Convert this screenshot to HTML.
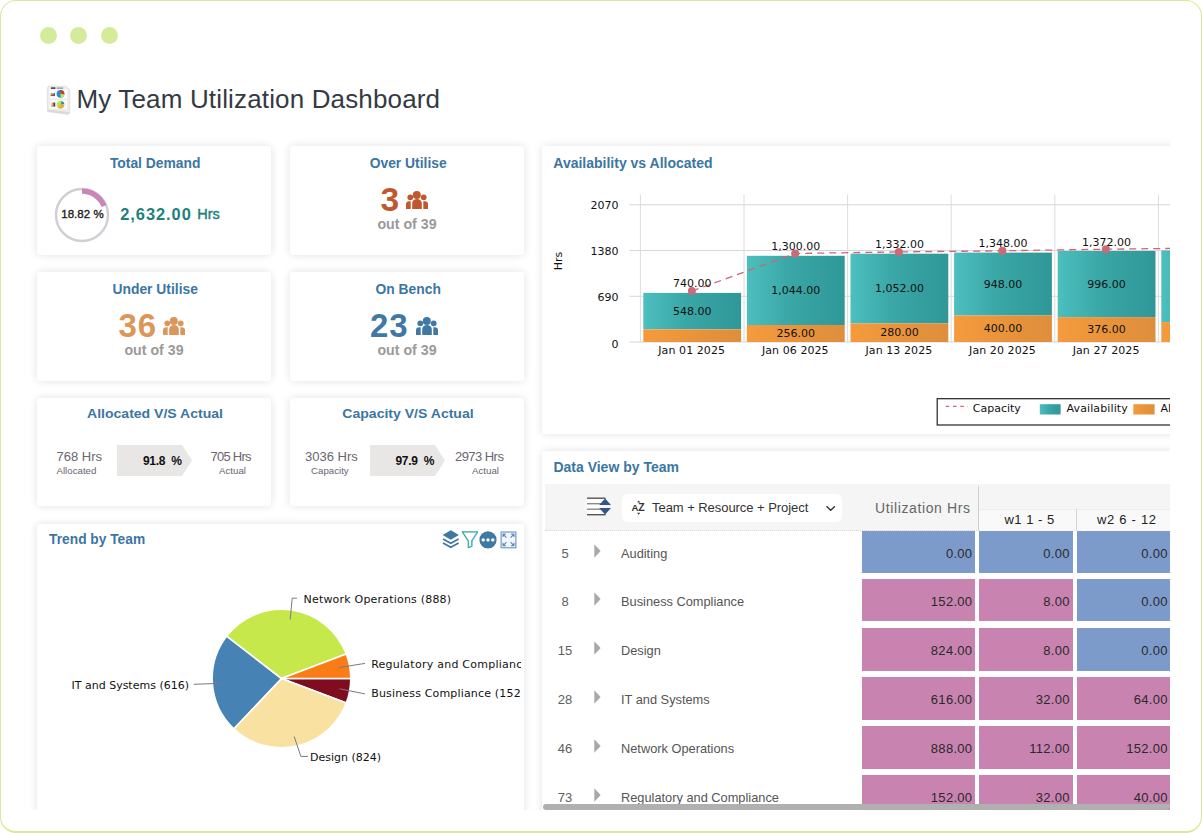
<!DOCTYPE html>
<html lang="en">
<head>
<meta charset="utf-8">
<title>My Team Utilization Dashboard</title>
<style>
*{box-sizing:border-box;margin:0;padding:0}
html,body{width:1202px;height:833px;overflow:hidden;background:#fff;font-family:"Liberation Sans",sans-serif;color:#333}
.abs{position:absolute}
#frame{position:absolute;left:0;top:0;width:1202px;height:833px;border:1.5px solid #d6ea9b;border-width:1.5px 1.8px 2px 1.5px;border-radius:16px;background:transparent;pointer-events:none;z-index:50}
#clip{position:absolute;left:0;top:0;width:1170px;height:809.5px;overflow:hidden}
.dot{position:absolute;top:27.2px;width:17px;height:17px;border-radius:50%;background:#d5eb9c}
.card{position:absolute;background:#fff;border-radius:3px;box-shadow:0 0 8px rgba(0,0,0,.10),0 0 13px rgba(0,0,0,.025)}
.ct{position:absolute;left:1.2px;width:100%;text-align:center;font-weight:bold;font-size:13.85px;color:#3b76a3;white-space:nowrap}
.pt{position:absolute;font-weight:bold;font-size:14px;color:#3b76a3;white-space:nowrap}
.big{position:absolute;font-weight:bold;white-space:nowrap;line-height:1}
.oo{position:absolute;left:0;width:100%;text-align:center;font-size:14.2px;color:#9a9a9a;font-weight:bold;white-space:nowrap;line-height:1}
.ct2{position:absolute;left:0;width:100%;text-align:center;font-weight:bold;font-size:12px;color:#3b76a3;white-space:nowrap;transform:scaleX(1.17);line-height:15px}
.lt{color:#6b6570}
.cell{position:absolute;height:42.7px;line-height:45.4px;text-align:right;padding-right:3.2px;font-size:13px;color:#2a2a2a;white-space:nowrap;letter-spacing:0.3px}
.rn{font-size:13px;color:#5e5e5e}
.rt{font-size:12.8px;color:#555;letter-spacing:0px}
.t{position:absolute;white-space:nowrap;line-height:1}
#title{position:absolute;left:76.5px;top:84px;font-size:26px;line-height:30px;color:#343a45;white-space:nowrap;letter-spacing:0.15px}
</style>
</head>
<body>
<div id="frame"></div>
<div id="clip">
  <div class="dot" style="left:40.2px"></div>
  <div class="dot" style="left:70px"></div>
  <div class="dot" style="left:100.5px"></div>

  <!--TICON-->
<svg class="abs" style="left:46px;top:85px" width="26" height="31" viewBox="0 0 26 31">
<path d="M2.6 1.2 H19.8 L23.8 5 V27.2 L22.6 29.4 L1.4 26.6 V3 Z" fill="#ececec" stroke="#dcdcdc" stroke-width="0.8"/>
<path d="M1.4 26.6 L22.6 29.4 L23.8 27.2 L2.2 24.6 Z" fill="#d9d9dd"/>
<rect x="3.6" y="4.6" width="17.4" height="8.8" fill="#fff"/>
<rect x="3.6" y="15" width="17.4" height="8.8" fill="#fbfbfb"/>
<rect x="5" y="2.4" width="4.4" height="1.4" fill="#2b2b33"/><rect x="10.8" y="2.6" width="6.4" height="1" fill="#7a7a86"/>
<circle cx="14.5" cy="8.8" r="3.9" fill="#2f88d8"/>
<path d="M14.5 8.8 L14.5 4.9 A3.9 3.9 0 0 1 18.3 9.6 Z" fill="#c8402a"/>
<path d="M14.5 8.8 L18.3 9.6 A3.9 3.9 0 0 1 14.8 12.7 Z" fill="#c9ee3a"/>
<rect x="4.6" y="8.4" width="4.4" height="1.2" fill="#4a6fb0"/><rect x="4.6" y="9.8" width="4.4" height="1.3" fill="#c44a1e"/><rect x="7.6" y="8.6" width="1.4" height="2.4" fill="#555"/>
<circle cx="14.5" cy="19.6" r="3.9" fill="#b7ee45"/>
<path d="M14.5 19.6 L15.8 15.9 A3.9 3.9 0 0 1 18.4 19 Z" fill="#2f88d8"/>
<path d="M14.5 19.6 L18.4 19.9 A3.9 3.9 0 0 1 11.8 22.4 Z" fill="#f5a348"/>
<rect x="5.4" y="17.8" width="1.2" height="3.8" fill="#f0c13a"/><rect x="6.6" y="17.4" width="1.2" height="4.2" fill="#d94b4b"/><rect x="7.8" y="17.6" width="1.4" height="4" fill="#3a3a44"/><rect x="5.4" y="20.6" width="1.2" height="1.2" fill="#38b6e8"/>
</svg>
<!--/TICON-->
  <div id="title">My Team Utilization Dashboard</div>

  <!-- KPI cards -->
  <div class="card" id="c1" style="left:37px;top:146px;width:234px;height:109px">
    <div class="ct" style="top:9px">Total Demand</div>
    <svg class="abs" style="left:16.2px;top:40.2px" width="58" height="58" viewBox="0 0 58 58">
      <circle cx="29" cy="29" r="26" fill="none" stroke="#d3ccd5" stroke-width="2.4"/>
      <path d="M29 5.2 A23.8 23.8 0 0 1 51 19.97" fill="none" stroke="#c985b7" stroke-width="5.2"/>
    </svg>
    <div class="t" style="left:24.2px;top:62.8px;font-size:11.5px;color:#1d1d1d;letter-spacing:0.05px;-webkit-text-stroke:0.35px #1d1d1d">18.82 %</div>
    <div class="t" style="left:83.3px;top:60.2px;font-size:16.4px;font-weight:bold;color:#1e7f7b;letter-spacing:0.95px">2,632.00</div>
    <div class="t" style="left:160.2px;top:60.7px;font-size:14.5px;color:#1e7f7b;-webkit-text-stroke:0.45px #1e7f7b">Hrs</div>
  </div>
  <div class="card" id="c2" style="left:290px;top:146px;width:234px;height:109px">
    <div class="ct" style="top:9px">Over Utilise</div>
    <div class="big" style="left:90.6px;top:36.6px;font-size:33.5px;color:#c0572f;letter-spacing:0px">3</div>
    <svg class="abs" style="left:116px;top:45px" width="22" height="18" viewBox="0 0 22 18" fill="#c0572f"><circle cx="10.8" cy="4" r="4"/>
<circle cx="4.3" cy="6.3" r="2.9"/>
<circle cx="17.7" cy="6.3" r="2.9"/>
<path d="M6.2 18 V12.2 a4.8 4.2 0 0 1 9.6 0 V18 Z"/>
<path d="M0 18 V13.6 a3.3 3.3 0 0 1 3.3 -3.3 h1.4 V18 Z"/>
<path d="M22 18 V13.6 a3.3 3.3 0 0 0 -3.3 -3.3 h-1.4 V18 Z"/></svg>
    <div class="oo" style="top:70.5px">out of 39</div>
  </div>
  <div class="card" id="c3" style="left:37px;top:272px;width:234px;height:109px">
    <div class="ct" style="top:9px">Under Utilise</div>
    <div class="big" style="left:81.5px;top:37px;font-size:33px;color:#db9659;letter-spacing:1px">36</div>
    <svg class="abs" style="left:126px;top:45px" width="22" height="18" viewBox="0 0 22 18" fill="#db9659"><circle cx="10.8" cy="4" r="4"/>
<circle cx="4.3" cy="6.3" r="2.9"/>
<circle cx="17.7" cy="6.3" r="2.9"/>
<path d="M6.2 18 V12.2 a4.8 4.2 0 0 1 9.6 0 V18 Z"/>
<path d="M0 18 V13.6 a3.3 3.3 0 0 1 3.3 -3.3 h1.4 V18 Z"/>
<path d="M22 18 V13.6 a3.3 3.3 0 0 0 -3.3 -3.3 h-1.4 V18 Z"/></svg>
    <div class="oo" style="top:70.5px">out of 39</div>
  </div>
  <div class="card" id="c4" style="left:290px;top:272px;width:234px;height:109px">
    <div class="ct" style="top:9px">On Bench</div>
    <div class="big" style="left:80px;top:37px;font-size:33px;color:#3f78a4;letter-spacing:1px">23</div>
    <svg class="abs" style="left:126px;top:45px" width="22" height="18" viewBox="0 0 22 18" fill="#3f78a4"><circle cx="10.8" cy="4" r="4"/>
<circle cx="4.3" cy="6.3" r="2.9"/>
<circle cx="17.7" cy="6.3" r="2.9"/>
<path d="M6.2 18 V12.2 a4.8 4.2 0 0 1 9.6 0 V18 Z"/>
<path d="M0 18 V13.6 a3.3 3.3 0 0 1 3.3 -3.3 h1.4 V18 Z"/>
<path d="M22 18 V13.6 a3.3 3.3 0 0 0 -3.3 -3.3 h-1.4 V18 Z"/></svg>
    <div class="oo" style="top:70.5px">out of 39</div>
  </div>
  <div class="card" id="c5" style="left:37px;top:398px;width:234px;height:108px">
    <div class="ct2" style="top:9.2px;left:1px">Allocated V/S Actual</div>
    <svg class="abs" style="left:80px;top:47px" width="76" height="31"><path d="M0 0 H65 L75 15.5 L65 31 H0 Z" fill="#e9e6e6"/></svg>
    <div class="t" style="left:106px;top:57px;font-size:12px;font-weight:bold;color:#111;letter-spacing:-0.3px;word-spacing:3px">91.8 %</div>
    <div class="t lt" style="left:19.5px;top:51.5px;font-size:13px">768 Hrs</div>
    <div class="t lt" style="left:19.5px;top:67.5px;font-size:9.7px">Allocated</div>
    <div class="t lt" style="left:173.5px;top:51.5px;font-size:13px;letter-spacing:-0.75px">705 Hrs</div>
    <div class="t lt" style="left:182px;top:67.5px;font-size:9.7px">Actual</div>
  </div>
  <div class="card" id="c6" style="left:290px;top:398px;width:234px;height:108px">
    <div class="ct2" style="top:9.2px;left:1px">Capacity V/S Actual</div>
    <svg class="abs" style="left:80px;top:47px" width="76" height="31"><path d="M0 0 H65 L75 15.5 L65 31 H0 Z" fill="#e9e6e6"/></svg>
    <div class="t" style="left:105.5px;top:57px;font-size:12px;font-weight:bold;color:#111;letter-spacing:-0.3px;word-spacing:3px">97.9 %</div>
    <div class="t lt" style="left:15px;top:51.5px;font-size:13px">3036 Hrs</div>
    <div class="t lt" style="left:21px;top:67.5px;font-size:9.7px">Capacity</div>
    <div class="t lt" style="left:165px;top:51.5px;font-size:13px;letter-spacing:-0.55px">2973 Hrs</div>
    <div class="t lt" style="left:182px;top:67.5px;font-size:9.7px">Actual</div>
  </div>

  <!-- Trend by team -->
  <div class="card" id="trend" style="left:37px;top:524px;width:487px;height:300px">
    <div class="pt" style="left:12.1px;top:8.3px;font-size:13.75px">Trend by Team</div>
<!--TOOLS-->
<svg class="abs" style="left:405px;top:5.5px" width="18" height="19" viewBox="0 0 18 19">
<path d="M8.8 0.3 L16.9 5 L8.8 9.7 L0.7 5 Z" fill="#3f78a3"/>
<path d="M1 8.9 L8.8 13.2 L16.6 8.9" fill="none" stroke="#3f78a3" stroke-width="1.7"/>
<path d="M1 12.9 L8.8 17.2 L16.6 12.9" fill="none" stroke="#3f78a3" stroke-width="1.7"/>
</svg>
<svg class="abs" style="left:424px;top:6px" width="18" height="19" viewBox="0 0 18 19">
<path d="M1.3 1.8 H16.7 L10.8 10.8 V16.2 L7.3 17.6 V10.8 Z" fill="#fff" stroke="#2aa9a0" stroke-width="1.2" stroke-linejoin="round"/>
<path d="M16.7 1.8 L10.8 10.8 V16.2" fill="none" stroke="#5bb4e8" stroke-width="1.2"/>
</svg>
<svg class="abs" style="left:442px;top:7px" width="18" height="18" viewBox="0 0 18 18">
<circle cx="9" cy="8.9" r="8.6" fill="#3f78a3"/><circle cx="4.2" cy="8.9" r="1.7" fill="#fff"/><circle cx="9" cy="8.9" r="1.7" fill="#fff"/><circle cx="13.8" cy="8.9" r="1.7" fill="#fff"/>
</svg>
<svg class="abs" style="left:463.1px;top:6.5px" width="17" height="18" viewBox="0 0 17 18">
<rect x="1.1" y="1" width="14.8" height="15.8" fill="#f2f6fc" stroke="#5a86bd" stroke-width="1"/>
<g stroke="#5a86bd" stroke-width="1.1" fill="none">
<path d="M3 3 L6.4 6.6 M3 3 h3 M3 3 v3" fill="none"/>
<path d="M14 3 L10.6 6.6 M14 3 h-3 M14 3 v3" fill="none"/>
<path d="M3 14.8 L6.4 11.2 M3 14.8 h3 M3 14.8 v-3" fill="none"/>
<path d="M14 14.8 L10.6 11.2 M14 14.8 h-3 M14 14.8 v-3" fill="none"/>
</g></svg>
<!--/TOOLS-->
<!--PIE-->
<svg class="abs" style="left:0;top:0" width="484" height="300" viewBox="37 524 484 300" font-family="'DejaVu Sans',sans-serif" font-size="11px">
<path d="M281.5 678.5 L350.80 678.50 A69.3 69.3 0 0 1 346.29 703.10 Z" fill="#800d1f" stroke="#fff" stroke-width="1.6" stroke-linejoin="round"/>
<path d="M281.5 678.5 L346.29 703.10 A69.3 69.3 0 0 1 233.80 728.77 Z" fill="#f9e2a1" stroke="#fff" stroke-width="1.6" stroke-linejoin="round"/>
<path d="M281.5 678.5 L233.80 728.77 A69.3 69.3 0 0 1 226.71 636.07 Z" fill="#4682b4" stroke="#fff" stroke-width="1.6" stroke-linejoin="round"/>
<path d="M281.5 678.5 L226.71 636.07 A69.3 69.3 0 0 1 346.29 653.90 Z" fill="#c6e84a" stroke="#fff" stroke-width="1.6" stroke-linejoin="round"/>
<path d="M281.5 678.5 L346.29 653.90 A69.3 69.3 0 0 1 350.80 678.50 Z" fill="#f97c16" stroke="#fff" stroke-width="1.6" stroke-linejoin="round"/>
<polyline points="297,598.2 292.2,598.2 290.2,619.5" fill="none" stroke="#7a7a86" stroke-width="1"/>
<polyline points="365,663.4 338.7,667.6" fill="none" stroke="#7a7a86" stroke-width="1"/>
<polyline points="365,693.9 339.6,688.8" fill="none" stroke="#7a7a86" stroke-width="1"/>
<polyline points="308,756.4 300.9,756.4 294.2,736.6" fill="none" stroke="#7a7a86" stroke-width="1"/>
<polyline points="193.7,684.3 221.6,683.3" fill="none" stroke="#7a7a86" stroke-width="1"/>
<text x="303.5" y="602.6" fill="#111" letter-spacing="0.2">Network Operations (888)</text>
<text x="371.2" y="667.5" fill="#111" letter-spacing="0.25">Regulatory and Compliance (152)</text>
<text x="371.2" y="697.2" fill="#111" letter-spacing="0.17">Business Compliance (152)</text>
<text x="310" y="760.8" fill="#111">Design (824)</text>
<text x="71.5" y="688.7" fill="#111">IT and Systems (616)</text>
</svg>
<!--/PIE-->
  </div>

  <!-- Availability vs Allocated -->
  <div class="card" id="avail" style="left:542px;top:146px;width:660px;height:288px">
    <div class="pt" style="left:11.3px;top:9.3px">Availability vs Allocated</div>
<!--CHART-->
<svg class="abs" style="left:0;top:0" width="660" height="288" viewBox="542 146 660 288" font-family="'DejaVu Sans',sans-serif" font-size="11px">
<defs><linearGradient id="gt" x1="0" x2="1" y1="0" y2="0"><stop offset="0" stop-color="#4cbfbe"/><stop offset="0.45" stop-color="#3aa6a6"/><stop offset="1" stop-color="#2f9797"/></linearGradient>
<linearGradient id="go" x1="0" x2="1" y1="0" y2="0"><stop offset="0" stop-color="#f59b3d"/><stop offset="0.5" stop-color="#e9933b"/><stop offset="1" stop-color="#de8e3c"/></linearGradient></defs>
<line x1="629.5" x2="1202" y1="342.0" y2="342.0" stroke="#d6d6da" stroke-width="1"/>
<line x1="629.5" x2="1202" y1="296.3" y2="296.3" stroke="#d6d6da" stroke-width="1"/>
<line x1="629.5" x2="1202" y1="250.5" y2="250.5" stroke="#d6d6da" stroke-width="1"/>
<line x1="629.5" x2="1202" y1="204.8" y2="204.8" stroke="#d6d6da" stroke-width="1"/>
<line x1="640.4" x2="640.4" y1="194.5" y2="342.3" stroke="#dcdcdf" stroke-width="1"/>
<line x1="744.0" x2="744.0" y1="194.5" y2="342.3" stroke="#dcdcdf" stroke-width="1"/>
<line x1="847.6" x2="847.6" y1="194.5" y2="342.3" stroke="#dcdcdf" stroke-width="1"/>
<line x1="951.2" x2="951.2" y1="194.5" y2="342.3" stroke="#dcdcdf" stroke-width="1"/>
<line x1="1054.8" x2="1054.8" y1="194.5" y2="342.3" stroke="#dcdcdf" stroke-width="1"/>
<line x1="1158.4" x2="1158.4" y1="194.5" y2="342.3" stroke="#dcdcdf" stroke-width="1"/>
<text x="618.5" y="347.6" text-anchor="end" fill="#111">0</text>
<text x="618.5" y="300.9" text-anchor="end" fill="#111">690</text>
<text x="618.5" y="255.1" text-anchor="end" fill="#111">1380</text>
<text x="618.5" y="209.4" text-anchor="end" fill="#111">2070</text>
<text transform="translate(562.4,261) rotate(-90)" text-anchor="middle" fill="#111">Hrs</text>
<rect x="643.3" y="292.9" width="97.8" height="36.3" fill="url(#gt)"/>
<rect x="643.3" y="329.3" width="97.8" height="12.7" fill="url(#go)"/>
<rect x="746.9" y="255.8" width="97.8" height="69.2" fill="url(#gt)"/>
<rect x="746.9" y="325.0" width="97.8" height="17.0" fill="url(#go)"/>
<rect x="850.5" y="253.7" width="97.8" height="69.7" fill="url(#gt)"/>
<rect x="850.5" y="323.4" width="97.8" height="18.6" fill="url(#go)"/>
<rect x="954.1" y="252.6" width="97.8" height="62.9" fill="url(#gt)"/>
<rect x="954.1" y="315.5" width="97.8" height="26.5" fill="url(#go)"/>
<rect x="1057.7" y="251.0" width="97.8" height="66.0" fill="url(#gt)"/>
<rect x="1057.7" y="317.1" width="97.8" height="24.9" fill="url(#go)"/>
<rect x="1161.3" y="250.5" width="97.8" height="71.6" fill="url(#gt)"/>
<rect x="1161.3" y="322.1" width="97.8" height="19.9" fill="url(#go)"/>
<polyline points="691.9,291.1 795.2,253.5 898.9,251.9 1002.4,250.8 1105.9,249.2 1209.5,248.0" fill="none" stroke="#cf6472" stroke-width="1.3" stroke-dasharray="7 5"/>
<circle cx="691.9" cy="291.1" r="4" fill="#cd6a77"/>
<circle cx="795.2" cy="253.5" r="4" fill="#cd6a77"/>
<circle cx="898.9" cy="251.9" r="4" fill="#cd6a77"/>
<circle cx="1002.4" cy="250.8" r="4" fill="#cd6a77"/>
<circle cx="1105.9" cy="249.2" r="4" fill="#cd6a77"/>
<text x="692.2" y="287.4" text-anchor="middle" fill="#111">740.00</text>
<text x="692.2" y="314.9" text-anchor="middle" fill="#111">548.00</text>
<text x="691.7" y="354.2" text-anchor="middle" fill="#111" letter-spacing="0.08">Jan 01 2025</text>
<text x="795.8" y="250.3" text-anchor="middle" fill="#111">1,300.00</text>
<text x="795.8" y="294.2" text-anchor="middle" fill="#111">1,044.00</text>
<text x="795.8" y="337.1" text-anchor="middle" fill="#111">256.00</text>
<text x="795.3" y="354.2" text-anchor="middle" fill="#111" letter-spacing="0.08">Jan 06 2025</text>
<text x="899.4" y="248.2" text-anchor="middle" fill="#111">1,332.00</text>
<text x="899.4" y="292.4" text-anchor="middle" fill="#111">1,052.00</text>
<text x="899.4" y="336.3" text-anchor="middle" fill="#111">280.00</text>
<text x="898.9" y="354.2" text-anchor="middle" fill="#111" letter-spacing="0.08">Jan 13 2025</text>
<text x="1003.0" y="247.1" text-anchor="middle" fill="#111">1,348.00</text>
<text x="1003.0" y="287.9" text-anchor="middle" fill="#111">948.00</text>
<text x="1003.0" y="332.3" text-anchor="middle" fill="#111">400.00</text>
<text x="1002.5" y="354.2" text-anchor="middle" fill="#111" letter-spacing="0.08">Jan 20 2025</text>
<text x="1106.6" y="245.5" text-anchor="middle" fill="#111">1,372.00</text>
<text x="1106.6" y="287.9" text-anchor="middle" fill="#111">996.00</text>
<text x="1106.6" y="333.1" text-anchor="middle" fill="#111">376.00</text>
<text x="1106.1" y="354.2" text-anchor="middle" fill="#111" letter-spacing="0.08">Jan 27 2025</text>
<rect x="937.2" y="398.7" width="300" height="26.3" fill="#fff" stroke="#222" stroke-width="1.2"/>
<line x1="945.7" x2="968" y1="406.3" y2="406.3" stroke="#cf6472" stroke-width="1.2" stroke-dasharray="3.5 3.8"/>
<text x="972.8" y="412.2" fill="#111">Capacity</text>
<rect x="1039.8" y="404.2" width="20.8" height="10.3" fill="url(#gt)"/>
<text x="1066.5" y="412.2" fill="#111" letter-spacing="0.12">Availability</text>
<rect x="1133.3" y="404.2" width="21.3" height="10.3" fill="url(#go)"/>
<text x="1160.6" y="412.2" fill="#111">Allocated</text>
</svg>
<!--/CHART-->
  </div>

  <!-- Data view -->
  <div class="card" id="dview" style="left:542px;top:451px;width:660px;height:371px">
    <div class="pt" style="left:11.4px;top:8.4px">Data View by Team</div>
<!--TABLE-->
<div class="abs" style="left:3px;top:33px;width:700px;height:46.5px;background:#f5f5f5;border-bottom:1px dotted #d9d9d9"></div>
<div class="abs" style="left:436.5px;top:57.60000000000002px;width:300px;height:22px;background:#f9f9f9;border-top:1px solid #ededed"></div>
<div class="abs" style="left:436px;top:35px;width:1px;height:44.5px;background:#cfcfcf"></div>
<div class="abs" style="left:533.5px;top:57.80000000000001px;width:1px;height:21.8px;background:#d4d4d4"></div>
<svg class="abs" style="left:44px;top:45px" width="27" height="21" viewBox="0 0 27 21">
<rect x="1" y="2" width="18.6" height="17" fill="#fdfdfd"/><g stroke-width="1.4"><line x1="1" x2="19.6" y1="2.2" y2="2.2" stroke="#555"/><line x1="1" x2="19" y1="7.7" y2="7.7" stroke="#8a8a8a"/><line x1="1" x2="19" y1="13.2" y2="13.2" stroke="#8a8a8a"/><line x1="1" x2="19.6" y1="18.7" y2="18.7" stroke="#555"/></g>
<path d="M13.2 9 L19.1 2.6 L25 9 Z" fill="#34548a"/><path d="M13.2 12 L19.1 18.4 L25 12 Z" fill="#34548a"/></svg>
<div class="abs" style="left:80px;top:43.30000000000001px;width:220.3px;height:27.5px;background:#fff;border-radius:6px"></div>
<div class="t" style="left:89.60000000000002px;top:50.30000000000001px;font-size:10.5px;line-height:12px;font-weight:bold;color:#333;letter-spacing:-0.3px"><span style="font-size:9.6px">A</span>Z</div>
<svg class="abs" style="left:95px;top:48px" width="8" height="18"><path d="M0.2 3.6 L1.7 1.6 L3.2 3.6 Z M0.2 13.7 L1.7 15.7 L3.2 13.7 Z" fill="#333"/></svg>
<div class="t" style="left:110px;top:50px;font-size:13px;color:#333;letter-spacing:-0.05px">Team + Resource + Project</div>
<svg class="abs" style="left:283px;top:52px" width="12" height="10"><path d="M1.5 3.2 L5.7 7.2 L9.9 3.2" fill="none" stroke="#333" stroke-width="1.4"/></svg>
<div class="t" style="left:333px;top:49.5px;font-size:14px;color:#666;letter-spacing:0.62px">Utilization Hrs</div>
<div class="t" style="left:462.5px;top:61.799999999999955px;font-size:13px;color:#222;letter-spacing:0.3px;word-spacing:0.5px">w1 1 - 5</div>
<div class="t" style="left:555px;top:61.799999999999955px;font-size:13px;color:#222;letter-spacing:0.5px;word-spacing:0.5px">w2 6 - 12</div>
<div class="t rn" style="left:8px;width:30px;text-align:center;top:95.79999999999995px">5</div>
<svg class="abs" style="left:52px;top:93.10000000000002px" width="8" height="14"><path d="M0.3 0.3 L6.6 7 L0.3 13.7 Z" fill="#a8a8a8"/></svg>
<div class="t rt" style="left:79px;top:96.89999999999998px">Auditing</div>
<div class="cell" style="left:320.4px;top:79.8px;width:112.5px;background:#7d9bca;padding-right:2.5px">0.00</div>
<div class="cell" style="left:437.0px;top:79.8px;width:94px;background:#7d9bca;padding-right:3.2px">0.00</div>
<div class="cell" style="left:535.0px;top:79.8px;width:93px;background:#7d9bca;padding-right:2.2px">0.00</div>
<div class="t rn" style="left:8px;width:30px;text-align:center;top:143.79999999999995px">8</div>
<svg class="abs" style="left:52px;top:141.10000000000002px" width="8" height="14"><path d="M0.3 0.3 L6.6 7 L0.3 13.7 Z" fill="#a8a8a8"/></svg>
<div class="t rt" style="left:79px;top:144.89999999999998px">Business Compliance</div>
<div class="cell" style="left:320.4px;top:127.8px;width:112.5px;background:#c983b1;padding-right:2.5px">152.00</div>
<div class="cell" style="left:437.0px;top:127.8px;width:94px;background:#c983b1;padding-right:3.2px">8.00</div>
<div class="cell" style="left:535.0px;top:127.8px;width:93px;background:#7d9bca;padding-right:2.2px">0.00</div>
<div class="t rn" style="left:8px;width:30px;text-align:center;top:193.0px">15</div>
<svg class="abs" style="left:52px;top:190.30000000000007px" width="8" height="14"><path d="M0.3 0.3 L6.6 7 L0.3 13.7 Z" fill="#a8a8a8"/></svg>
<div class="t rt" style="left:79px;top:194.10000000000002px">Design</div>
<div class="cell" style="left:320.4px;top:177.0px;width:112.5px;background:#c983b1;padding-right:2.5px">824.00</div>
<div class="cell" style="left:437.0px;top:177.0px;width:94px;background:#c983b1;padding-right:3.2px">8.00</div>
<div class="cell" style="left:535.0px;top:177.0px;width:93px;background:#7d9bca;padding-right:2.2px">0.00</div>
<div class="t rn" style="left:8px;width:30px;text-align:center;top:242.0px">28</div>
<svg class="abs" style="left:52px;top:239.30000000000007px" width="8" height="14"><path d="M0.3 0.3 L6.6 7 L0.3 13.7 Z" fill="#a8a8a8"/></svg>
<div class="t rt" style="left:79px;top:243.10000000000002px">IT and Systems</div>
<div class="cell" style="left:320.4px;top:226.0px;width:112.5px;background:#c983b1;padding-right:2.5px">616.00</div>
<div class="cell" style="left:437.0px;top:226.0px;width:94px;background:#c983b1;padding-right:3.2px">32.00</div>
<div class="cell" style="left:535.0px;top:226.0px;width:93px;background:#c983b1;padding-right:2.2px">64.00</div>
<div class="t rn" style="left:8px;width:30px;text-align:center;top:291.0px">46</div>
<svg class="abs" style="left:52px;top:288.30000000000007px" width="8" height="14"><path d="M0.3 0.3 L6.6 7 L0.3 13.7 Z" fill="#a8a8a8"/></svg>
<div class="t rt" style="left:79px;top:292.1px">Network Operations</div>
<div class="cell" style="left:320.4px;top:275.0px;width:112.5px;background:#c983b1;padding-right:2.5px">888.00</div>
<div class="cell" style="left:437.0px;top:275.0px;width:94px;background:#c983b1;padding-right:3.2px">112.00</div>
<div class="cell" style="left:535.0px;top:275.0px;width:93px;background:#c983b1;padding-right:2.2px">152.00</div>
<div class="t rn" style="left:8px;width:30px;text-align:center;top:340.0px">73</div>
<svg class="abs" style="left:52px;top:337.30000000000007px" width="8" height="14"><path d="M0.3 0.3 L6.6 7 L0.3 13.7 Z" fill="#a8a8a8"/></svg>
<div class="t rt" style="left:79px;top:341.1px">Regulatory and Compliance</div>
<div class="cell" style="left:320.4px;top:324.0px;width:112.5px;background:#c983b1;padding-right:2.5px">152.00</div>
<div class="cell" style="left:437.0px;top:324.0px;width:94px;background:#c983b1;padding-right:3.2px">32.00</div>
<div class="cell" style="left:535.0px;top:324.0px;width:93px;background:#c983b1;padding-right:2.2px">40.00</div>
<div class="abs" style="left:1px;top:353px;width:626.7px;height:5.7px;background:#b0b0b0;border-radius:3px 0 4px 3px"></div>
<!--/TABLE-->
  </div>
</div>
</body>
</html>
